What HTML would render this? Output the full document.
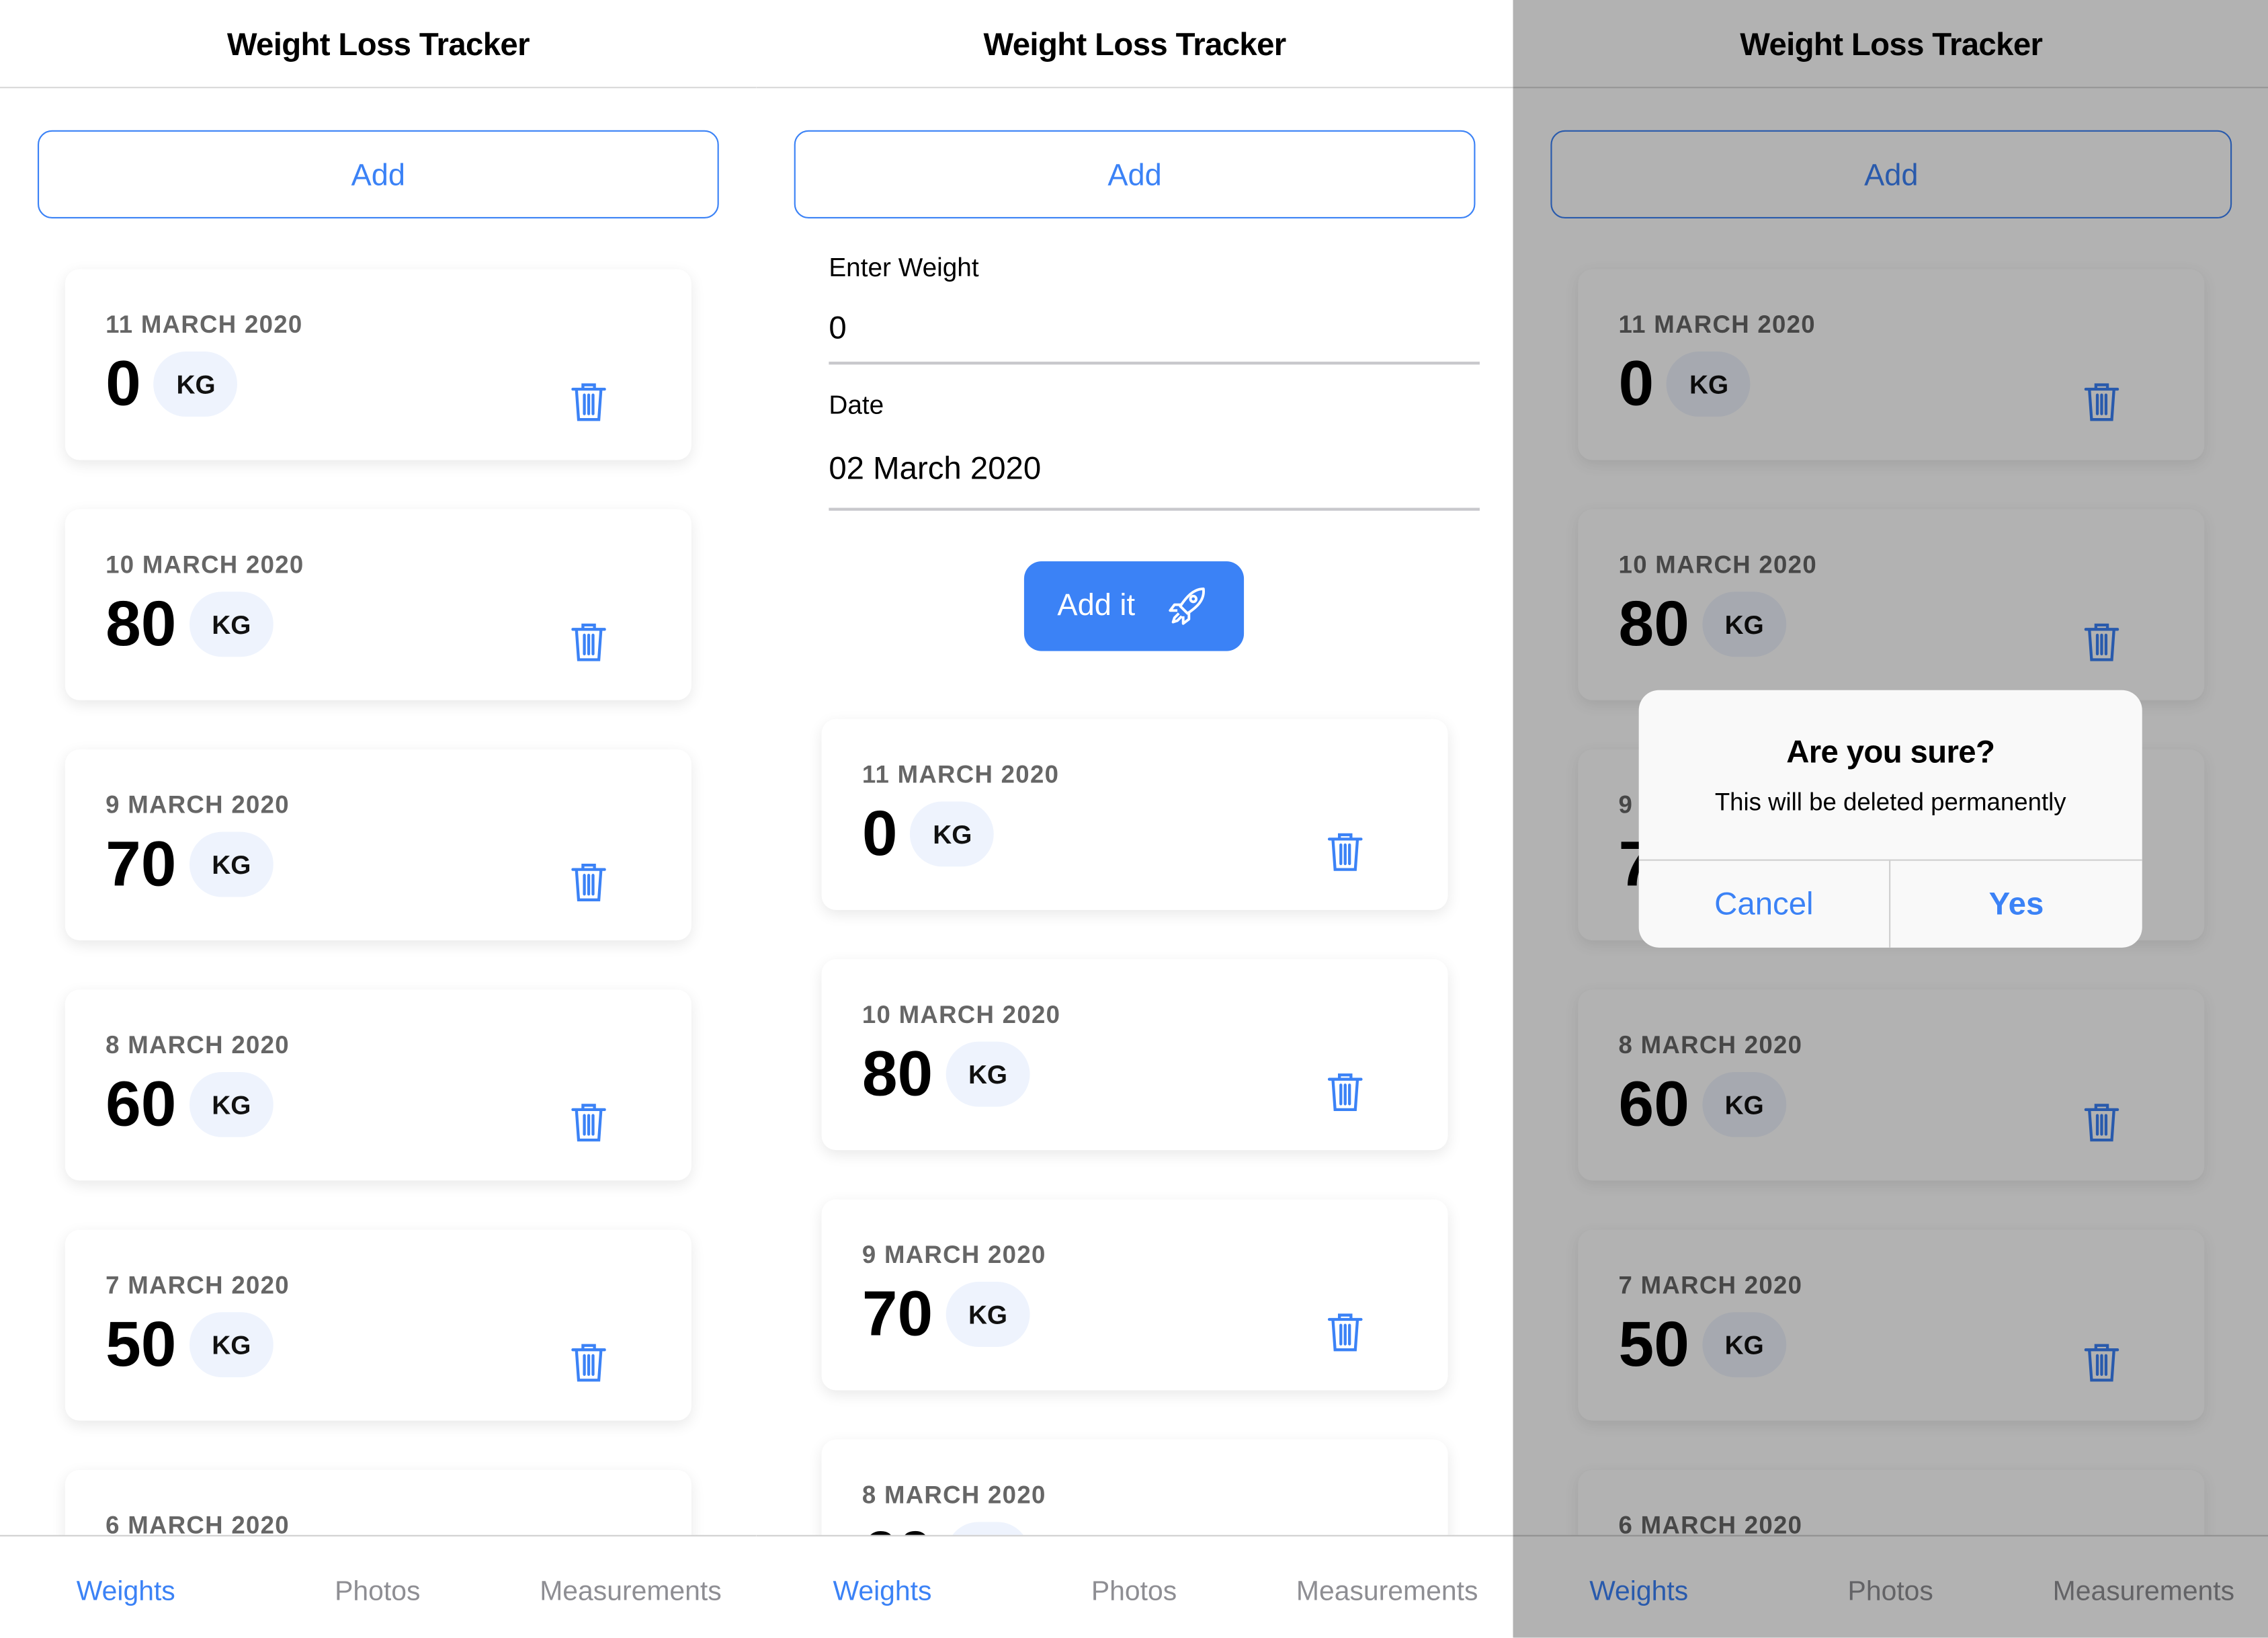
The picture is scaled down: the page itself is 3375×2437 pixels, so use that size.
<!DOCTYPE html>
<html><head><meta charset="utf-8"><style>
*{margin:0;padding:0;box-sizing:border-box}
html,body{width:3375px;height:2436px;overflow:hidden;background:#fff}
#root{position:absolute;left:0;top:0;width:1568px;height:1132px;transform:scale(2.15242);transform-origin:0 0;font-family:"Liberation Sans",sans-serif}
.panel{position:absolute;top:0;width:523px;height:1132px;overflow:hidden;background:#fff}
.hdr{position:absolute;left:0;top:0;width:100%;height:61px;border-bottom:1px solid #d8d8d8;text-align:center;line-height:62px;font-size:22px;font-weight:bold;color:#000;letter-spacing:-0.3px}
.add{position:absolute;left:26px;top:90px;width:471px;height:61px;border:1.5px solid #3b82f6;border-radius:10px;text-align:center;line-height:62px;font-size:21px;color:#3b82f6}
.card{position:absolute;left:45px;width:433px;height:132px;background:#fff;border-radius:10px;box-shadow:0 3px 10px rgba(0,0,0,0.09)}
.date{position:absolute;left:28px;top:29px;font-size:17px;font-weight:bold;color:#666;letter-spacing:0.6px;line-height:20px}
.row{position:absolute;left:28px;top:57px;height:45px;display:flex;align-items:center}
.num{font-size:44px;font-weight:bold;color:#000;line-height:45px}
.kg{margin-left:9px;width:58px;height:45px;border-radius:23px;background:#eef3fd;text-align:center;line-height:47px;font-size:18px;font-weight:bold;color:#111}
.trash{position:absolute;left:350px;top:78px}
.tab{position:absolute;left:0;top:1061px;width:100%;height:71px;border-top:1px solid #d0d0d0;background:#fff;font-size:19px;color:#8e8e93}
.tab span{position:absolute;top:28px;transform:translateX(-50%)}
.lbl{position:absolute;left:50px;font-size:18px;color:#000}
.line{position:absolute;left:50px;width:450px;height:2px;background:#c8c8cc}
</style></head><body><div id="root">

<!-- Panel 1 -->
<div class="panel" style="left:0">
<div class="hdr">Weight Loss Tracker</div>
<div class="add">Add</div>
<div class="card" style="top:186px"><div class="date">11 MARCH 2020</div><div class="row"><span class="num">0</span><span class="kg">KG</span></div><svg class="trash" width="24" height="28" viewBox="0 0 24 28" fill="none" stroke="#3b82f6" stroke-width="2" stroke-linecap="round"><path d="M1 5h22M8 5V2h8v3M3.5 5l1.5 21h14l1.5-21M9 9v13M12 9v13M15 9v13"/></svg></div>
<div class="card" style="top:352px"><div class="date">10 MARCH 2020</div><div class="row"><span class="num">80</span><span class="kg">KG</span></div><svg class="trash" width="24" height="28" viewBox="0 0 24 28" fill="none" stroke="#3b82f6" stroke-width="2" stroke-linecap="round"><path d="M1 5h22M8 5V2h8v3M3.5 5l1.5 21h14l1.5-21M9 9v13M12 9v13M15 9v13"/></svg></div>
<div class="card" style="top:518px"><div class="date">9 MARCH 2020</div><div class="row"><span class="num">70</span><span class="kg">KG</span></div><svg class="trash" width="24" height="28" viewBox="0 0 24 28" fill="none" stroke="#3b82f6" stroke-width="2" stroke-linecap="round"><path d="M1 5h22M8 5V2h8v3M3.5 5l1.5 21h14l1.5-21M9 9v13M12 9v13M15 9v13"/></svg></div>
<div class="card" style="top:684px"><div class="date">8 MARCH 2020</div><div class="row"><span class="num">60</span><span class="kg">KG</span></div><svg class="trash" width="24" height="28" viewBox="0 0 24 28" fill="none" stroke="#3b82f6" stroke-width="2" stroke-linecap="round"><path d="M1 5h22M8 5V2h8v3M3.5 5l1.5 21h14l1.5-21M9 9v13M12 9v13M15 9v13"/></svg></div>
<div class="card" style="top:850px"><div class="date">7 MARCH 2020</div><div class="row"><span class="num">50</span><span class="kg">KG</span></div><svg class="trash" width="24" height="28" viewBox="0 0 24 28" fill="none" stroke="#3b82f6" stroke-width="2" stroke-linecap="round"><path d="M1 5h22M8 5V2h8v3M3.5 5l1.5 21h14l1.5-21M9 9v13M12 9v13M15 9v13"/></svg></div>
<div class="card" style="top:1016px"><div class="date">6 MARCH 2020</div></div>
<div class="tab"><span style="left:87px;color:#3b82f6">Weights</span><span style="left:261px">Photos</span><span style="left:436px">Measurements</span></div>
</div>

<!-- Panel 2 -->
<div class="panel" style="left:523px">
<div class="hdr">Weight Loss Tracker</div>
<div class="add">Add</div>
<div class="lbl" style="top:175px">Enter Weight</div>
<div class="lbl" style="top:214px;font-size:22px">0</div>
<div class="line" style="top:250px"></div>
<div class="lbl" style="top:270px">Date</div>
<div class="lbl" style="top:311px;font-size:22px">02 March 2020</div>
<div class="line" style="top:351px"></div>
<div style="position:absolute;left:185px;top:388px;width:152px;height:62px;border-radius:12px;background:#3b82f6;color:#fff;font-size:21px">
<span style="position:absolute;left:23px;top:19px">Add it</span>
<svg style="position:absolute;left:99px;top:17px" width="28" height="28" viewBox="0 0 28 28" fill="none" stroke="#fff" stroke-width="1.8" stroke-linejoin="round"><path d="M25 2C18 2 13 8 9 14l5 5c6-4 12-9 11-17z"/><circle cx="18" cy="9" r="2"/><path d="M10 13H5l-3 4 5 0M15 18v5l-4 3 0-5M8 19l-3 3-1 3 3-1 3-3"/></svg>
</div>
<div class="card" style="top:497px"><div class="date">11 MARCH 2020</div><div class="row"><span class="num">0</span><span class="kg">KG</span></div><svg class="trash" width="24" height="28" viewBox="0 0 24 28" fill="none" stroke="#3b82f6" stroke-width="2" stroke-linecap="round"><path d="M1 5h22M8 5V2h8v3M3.5 5l1.5 21h14l1.5-21M9 9v13M12 9v13M15 9v13"/></svg></div>
<div class="card" style="top:663px"><div class="date">10 MARCH 2020</div><div class="row"><span class="num">80</span><span class="kg">KG</span></div><svg class="trash" width="24" height="28" viewBox="0 0 24 28" fill="none" stroke="#3b82f6" stroke-width="2" stroke-linecap="round"><path d="M1 5h22M8 5V2h8v3M3.5 5l1.5 21h14l1.5-21M9 9v13M12 9v13M15 9v13"/></svg></div>
<div class="card" style="top:829px"><div class="date">9 MARCH 2020</div><div class="row"><span class="num">70</span><span class="kg">KG</span></div><svg class="trash" width="24" height="28" viewBox="0 0 24 28" fill="none" stroke="#3b82f6" stroke-width="2" stroke-linecap="round"><path d="M1 5h22M8 5V2h8v3M3.5 5l1.5 21h14l1.5-21M9 9v13M12 9v13M15 9v13"/></svg></div>
<div class="card" style="top:995px"><div class="date">8 MARCH 2020</div><div class="row"><span class="num">60</span><span class="kg">KG</span></div></div>
<div class="tab"><span style="left:87px;color:#3b82f6">Weights</span><span style="left:261px">Photos</span><span style="left:436px">Measurements</span></div>
</div>

<!-- Panel 3 -->
<div class="panel" style="left:1046px">
<div class="hdr">Weight Loss Tracker</div>
<div class="add">Add</div>
<div class="card" style="top:186px"><div class="date">11 MARCH 2020</div><div class="row"><span class="num">0</span><span class="kg">KG</span></div><svg class="trash" width="24" height="28" viewBox="0 0 24 28" fill="none" stroke="#3b82f6" stroke-width="2" stroke-linecap="round"><path d="M1 5h22M8 5V2h8v3M3.5 5l1.5 21h14l1.5-21M9 9v13M12 9v13M15 9v13"/></svg></div>
<div class="card" style="top:352px"><div class="date">10 MARCH 2020</div><div class="row"><span class="num">80</span><span class="kg">KG</span></div><svg class="trash" width="24" height="28" viewBox="0 0 24 28" fill="none" stroke="#3b82f6" stroke-width="2" stroke-linecap="round"><path d="M1 5h22M8 5V2h8v3M3.5 5l1.5 21h14l1.5-21M9 9v13M12 9v13M15 9v13"/></svg></div>
<div class="card" style="top:518px"><div class="date">9 MARCH 2020</div><div class="row"><span class="num">70</span><span class="kg">KG</span></div><svg class="trash" width="24" height="28" viewBox="0 0 24 28" fill="none" stroke="#3b82f6" stroke-width="2" stroke-linecap="round"><path d="M1 5h22M8 5V2h8v3M3.5 5l1.5 21h14l1.5-21M9 9v13M12 9v13M15 9v13"/></svg></div>
<div class="card" style="top:684px"><div class="date">8 MARCH 2020</div><div class="row"><span class="num">60</span><span class="kg">KG</span></div><svg class="trash" width="24" height="28" viewBox="0 0 24 28" fill="none" stroke="#3b82f6" stroke-width="2" stroke-linecap="round"><path d="M1 5h22M8 5V2h8v3M3.5 5l1.5 21h14l1.5-21M9 9v13M12 9v13M15 9v13"/></svg></div>
<div class="card" style="top:850px"><div class="date">7 MARCH 2020</div><div class="row"><span class="num">50</span><span class="kg">KG</span></div><svg class="trash" width="24" height="28" viewBox="0 0 24 28" fill="none" stroke="#3b82f6" stroke-width="2" stroke-linecap="round"><path d="M1 5h22M8 5V2h8v3M3.5 5l1.5 21h14l1.5-21M9 9v13M12 9v13M15 9v13"/></svg></div>
<div class="card" style="top:1016px"><div class="date">6 MARCH 2020</div></div>
<div class="tab"><span style="left:87px;color:#3b82f6">Weights</span><span style="left:261px">Photos</span><span style="left:436px">Measurements</span></div>
<div style="position:absolute;left:0;top:0;width:100%;height:100%;background:rgba(0,0,0,0.3)"></div>
<div style="position:absolute;left:87px;top:477px;width:348px;height:178px;border-radius:14px;background:#f9f9f9;overflow:hidden">
<div style="position:absolute;left:0;top:30px;width:100%;text-align:center;font-size:22px;font-weight:bold;color:#000;letter-spacing:-0.3px">Are you sure?</div>
<div style="position:absolute;left:0;top:68px;width:100%;text-align:center;font-size:17px;color:#000">This will be deleted permanently</div>
<div style="position:absolute;left:0;top:117px;width:100%;height:1px;background:#cfcfcf"></div>
<div style="position:absolute;left:173px;top:117px;width:1px;height:61px;background:#cfcfcf"></div>
<div style="position:absolute;left:0;top:135px;width:173px;text-align:center;font-size:22px;color:#3b82f6">Cancel</div>
<div style="position:absolute;left:174px;top:135px;width:174px;text-align:center;font-size:22px;font-weight:bold;color:#3b82f6">Yes</div>
</div>
</div>

</div></body></html>
